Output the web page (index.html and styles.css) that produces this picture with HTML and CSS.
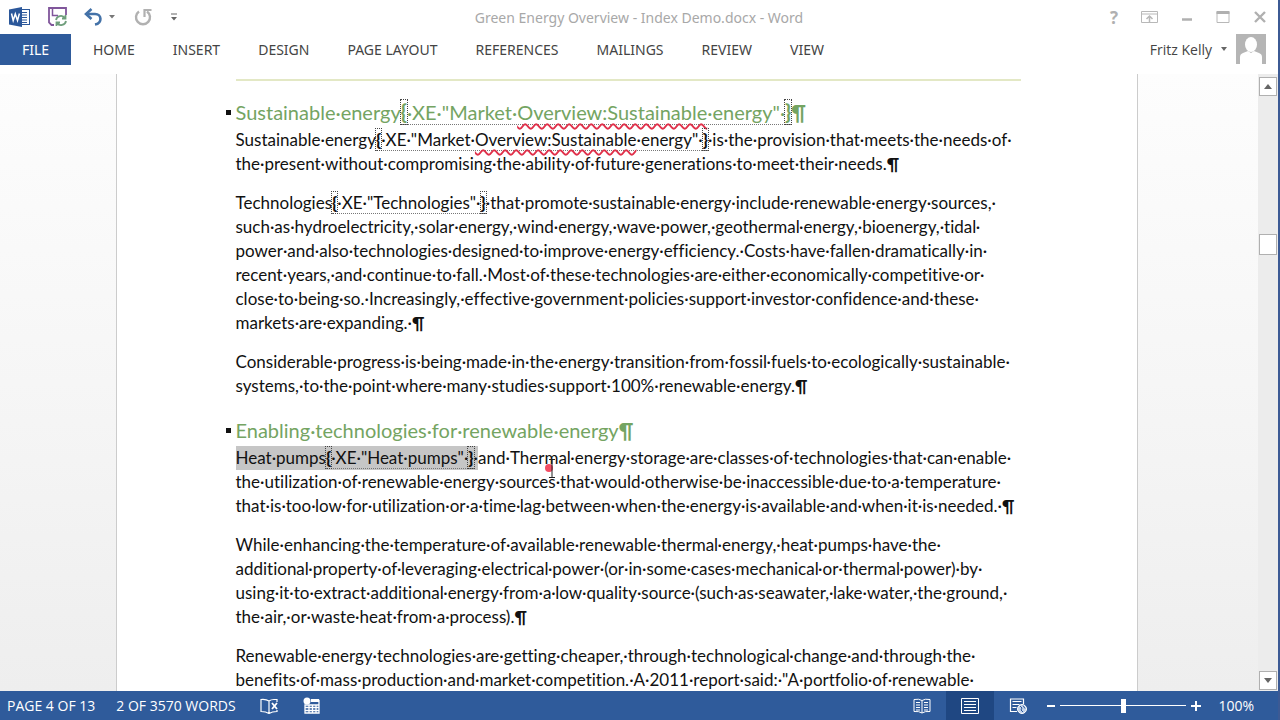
FILE: index.html
```
<!DOCTYPE html>
<html lang="en">
<head>
    <meta charset="UTF-8">
    <meta name="viewport" content="width=device-width, initial-scale=1.0">
    <title>Green Energy Overview - Index Demo.docx - Word</title>
    <link rel="stylesheet" href="styles.css">
</head>
<body>
    <header class="title-bar">
        <div class="quick-access">
            <svg class="word-logo" width="22" height="20" viewBox="0 0 22 20" aria-hidden="true">
                <rect x="9" y="2.500" width="11.500" height="15" fill="#fff" stroke="#2b579a"/>
                <path d="M12 5.500h6M12 8h6M12 10.500h6M12 13h6M12 15.500h6" stroke="#2b579a"/>
                <path d="M0 2.500L13 0v20L0 17.500z" fill="#2b579a"/>
                <path d="M2.500 6.500l1.700 7L6.300 7l2.200 6.500 1.900-7" fill="none" stroke="#fff" stroke-width="1.500"/>
            </svg>
            <button class="icon-button save" aria-label="Save">
                <svg width="20" height="20" viewBox="0 0 20 20">
                    <path d="M6 18H3.500L1 15.500V1h17v7" fill="none" stroke="#80569b" stroke-width="1.800"/>
                    <path d="M4.500 1v7.500H10" fill="none" stroke="#80569b" stroke-width="1.500"/>
                    <path d="M8 13a5 5 0 0 1 9-2M17.500 8v3.500H14M18 14a5 5 0 0 1-9 2M8.500 19v-3.500H12" fill="none" stroke="#6f9e7c" stroke-width="1.800"/>
                </svg>
            </button>
            <button class="icon-button undo" aria-label="Undo">
                <svg width="32" height="18" viewBox="0 0 32 18">
                    <path d="M2 6h9c7 0 7.500 9 0 10.500" fill="none" stroke="#4472a8" stroke-width="2.600"/>
                    <path d="M7.500 1L2 6l5.500 5" fill="none" stroke="#4472a8" stroke-width="2.600"/>
                    <path d="M25 7h6l-3 3.500z" fill="#777"/>
                </svg>
            </button>
            <button class="icon-button redo" aria-label="Repeat">
                <svg width="18" height="18" viewBox="0 0 18 18">
                    <path d="M5 3.500A7 7 0 1 0 13 3.500" fill="none" stroke="#b1b1b1" stroke-width="2.400"/>
                    <path d="M10.500 9V2h7" fill="none" stroke="#b1b1b1" stroke-width="2.200"/>
                </svg>
            </button>
            <button class="icon-button" aria-label="Customize Quick Access Toolbar">
                <svg width="8" height="8" viewBox="0 0 8 8">
                    <path d="M1 1h6" stroke="#666"/>
                    <path d="M1 4h6L4 7.500z" fill="#666"/>
                </svg>
            </button>
        </div>
        <div class="document-title">Green Energy Overview - Index Demo.docx - Word</div>
        <div class="window-controls">
            <button class="icon-button help" aria-label="Help">?</button>
            <button class="icon-button" aria-label="Ribbon Display Options">
                <svg width="17" height="14" viewBox="0 0 17 14" fill="none" stroke="#b8b8b8">
                    <path d="M.5 1.500h16v11H.5zM.5 4h16"/>
                    <path d="M8.500 12V6.500M5.500 9l3-3 3 3" stroke-width="1.500"/>
                </svg>
            </button>
            <button class="icon-button" aria-label="Minimize">
                <svg width="12" height="14" viewBox="0 0 12 14"><path d="M1 9.500h10" stroke="#b0b0b0" stroke-width="2.500"/></svg>
            </button>
            <button class="icon-button" aria-label="Maximize">
                <svg width="14" height="14" viewBox="0 0 14 14"><path d="M1 2h12v10.500H1z" fill="none" stroke="#b8b8b8"/><path d="M.5 2.500h13" stroke="#b0b0b0" stroke-width="3"/></svg>
            </button>
            <button class="icon-button" aria-label="Close">
                <svg width="14" height="14" viewBox="0 0 14 14"><path d="M2 2l10 10M12 2L2 12" stroke="#b0b0b0" stroke-width="2.400"/></svg>
            </button>
        </div>
    </header>

    <nav class="ribbon">
        <button class="tab file-tab">FILE</button>
        <button class="tab">HOME</button>
        <button class="tab">INSERT</button>
        <button class="tab">DESIGN</button>
        <button class="tab">PAGE LAYOUT</button>
        <button class="tab">REFERENCES</button>
        <button class="tab">MAILINGS</button>
        <button class="tab">REVIEW</button>
        <button class="tab">VIEW</button>
        <button class="account">
            <span>Fritz Kelly</span>
            <svg width="6" height="4" viewBox="0 0 6 4"><path d="M0 0h6L3 4z" fill="#666"/></svg>
            <svg class="avatar" width="30" height="30" viewBox="0 0 30 30">
                <path d="M0 0h30v30H0z" fill="#b5b5b5"/>
                <path d="M4 30V23q0-3 3-4l5-2 3 2 3-2 5 2q3 1 3 4v7z" fill="#fff"/>
                <ellipse cx="15" cy="10.500" rx="6" ry="7.500" fill="#fff"/>
            </svg>
        </button>
    </nav>

    <main class="workspace">
        <div class="canvas">
            <article class="page">
                <h2><span>Sustainable·energy<span class="field"><b>{</b>·XE·"Market·<span class="spelling">Overview:Sustainable</span>·energy"·<b>}</b></span><span class="mark">¶</span></span></h2>
                <p>
                    Sustainable·energy<span class="field"><b>{</b>·XE·"Market·<span class="spelling">Overview:Sustainable</span>·energy"·<b>}</b></span>·is·the·provision·that·meets·the·needs·of·<br>
                    the·present·without·compromising·the·ability·of·future·generations·to·meet·their·needs.<span class="mark">¶</span>
                </p>
                <p>
                    Technologies<span class="field"><b>{</b>·XE·"Technologies"·<b>}</b></span>·that·promote·sustainable·energy·include·renewable·energy·sources,·<br>
                    such·as·hydroelectricity,·solar·energy,·wind·energy,·wave·power,·geothermal·energy,·bioenergy,·tidal·<br>
                    power·and·also·technologies·designed·to·improve·energy·efficiency.·Costs·have·fallen·dramatically·in·<br>
                    recent·years,·and·continue·to·fall.·Most·of·these·technologies·are·either·economically·competitive·or·<br>
                    close·to·being·so.·Increasingly,·effective·government·policies·support·investor·confidence·and·these·<br>
                    markets·are·expanding.·<span class="mark">¶</span>
                </p>
                <p>
                    Considerable·progress·is·being·made·in·the·energy·transition·from·fossil·fuels·to·ecologically·sustainable·<br>
                    systems,·to·the·point·where·many·studies·support·100%·renewable·energy.<span class="mark">¶</span>
                </p>
                <h2><span>Enabling·technologies·for·renewable·energy<span class="mark">¶</span></span></h2>
                <p>
                    <span class="selected">Heat·pumps<span class="field"><b>{</b>·XE·"Heat·pumps"·<b>}</b></span>·</span>and·Ther<span class="pointer-spot">m<svg class="pointer" width="14" height="30" viewBox="0 0 14 30" aria-hidden="true"><circle cx="5" cy="12" r="4" fill="#f0203c" opacity=".8"/><path d="M5 3.500h6M8 3.500v18M5 21.500h6" stroke="#222" fill="none"/></svg></span>al·energy·storage·are·classes·of·technologies·that·can·enable·<br>
                    the·utilization·of·renewable·energy·sources·that·would·otherwise·be·inaccessible·due·to·a·temperature·<br>
                    that·is·too·low·for·utilization·or·a·time·lag·between·when·the·energy·is·available·and·when·it·is·needed.·<span class="mark">¶</span>
                </p>
                <p>
                    While·enhancing·the·temperature·of·available·renewable·thermal·energy,·heat·pumps·have·the·<br>
                    additional·property·of·leveraging·electrical·power·(or·in·some·cases·mechanical·or·thermal·power)·by·<br>
                    using·it·to·extract·additional·energy·from·a·low·quality·source·(such·as·seawater,·lake·water,·the·ground,·<br>
                    the·air,·or·waste·heat·from·a·process).<span class="mark">¶</span>
                </p>
                <p>
                    Renewable·energy·technologies·are·getting·cheaper,·through·technological·change·and·through·the·<br>
                    benefits·of·mass·production·and·market·competition.·A·2011·report·said:·"A·portfolio·of·renewable·
                </p>
            </article>
        </div>
        <div class="scrollbar">
            <button class="scroll-button" aria-label="Scroll up"><svg width="8" height="5" viewBox="0 0 8 5"><path d="M0 5h8L4 0z" fill="#666"/></svg></button>
            <div class="scroll-track"><div class="scroll-thumb"></div></div>
            <button class="scroll-button" aria-label="Scroll down"><svg width="8" height="5" viewBox="0 0 8 5"><path d="M0 0h8L4 5z" fill="#666"/></svg></button>
        </div>
    </main>

    <footer class="status-bar">
        <span class="page-count">PAGE 4 OF 13</span>
        <span class="word-count">2 OF 3570 WORDS</span>
        <button class="icon-button proofing" aria-label="Proofing errors">
            <svg width="19" height="16" viewBox="0 0 19 16" fill="none" stroke="#fff">
                <path d="M9 3Q6 1 1 1.500v12q5 0 8 2zM9 3q2-1.500 5-1.500h3V4M9 15.500q3-2 8-2V12" stroke-width="1.200"/>
                <path d="M12 5l5 6M17 5l-5 6" stroke-width="1.800"/>
            </svg>
        </button>
        <button class="icon-button" aria-label="Macro recording">
            <svg width="17" height="17" viewBox="0 0 17 17">
                <path d="M2 8h14v8H2zM2 10.500h14M2 13.500h14M6 8v8M9.500 8v8M13 8v8M9 3.500h7V8" fill="none" stroke="#fff" stroke-width="1.300"/>
                <path d="M8 2h8v3H8z" fill="#fff"/>
                <circle cx="4" cy="4" r="3.500" fill="#fff"/>
            </svg>
        </button>
        <div class="view-buttons">
            <button class="view-button" aria-label="Read Mode">
                <svg width="18" height="16" viewBox="0 0 18 16" fill="none" stroke="#fff">
                    <path d="M9 2.500Q6 .5 1 1.500v12q5-.5 8 1.500 3-2 8-1.500v-12q-5-1-8 1zM9 2.500V15"/>
                    <path d="M3 4.500h4M3 7h4M3 9.500h4M3 12h4M11 4.500h4M11 7h4M11 9.500h4M11 12h4"/>
                </svg>
            </button>
            <button class="view-button active" aria-label="Print Layout">
                <svg width="18" height="16" viewBox="0 0 18 16" fill="none" stroke="#fff">
                    <path d="M.5.5h17v15H.5zM3 3.500h12M3 6.500h12M3 9.500h12M3 12.500h12"/>
                </svg>
            </button>
            <button class="view-button" aria-label="Web Layout">
                <svg width="18" height="16" viewBox="0 0 18 16" fill="none" stroke="#fff">
                    <path d="M8 13.500H1.500V1h13v5M3.500 3.500h9M3.500 6.500h7M3.500 9.500h4" stroke-width="1.200"/>
                    <circle cx="13" cy="11" r="4.500" fill="#c3d3ea"/>
                    <path d="M11 8l2 2-1 2 2 2M14 7.500l2 3" stroke="#2b579a"/>
                </svg>
            </button>
        </div>
        <button class="zoom-button" aria-label="Zoom out"><svg width="8" height="10" viewBox="0 0 8 10"><path d="M0 5h8" stroke="#fff" stroke-width="2"/></svg></button>
        <input class="zoom-slider" type="range" min="0" max="100" value="50" aria-label="Zoom">
        <button class="zoom-button" aria-label="Zoom in"><svg width="10" height="10" viewBox="0 0 10 10"><path d="M0 5h10M5 0v10" stroke="#fff" stroke-width="2"/></svg></button>
        <button class="zoom-level">100%</button>
    </footer>
</body>
</html>
```
FILE: styles.css
```
* {
    box-sizing: border-box;
}

body {
    margin: 0;
    height: 100vh;
    display: flex;
    flex-direction: column;
    overflow: hidden;
    background: #fff;
    border-right: 2px solid #3c5a94;
    color: #444;
    font-family: "Open Sans", "Segoe UI", sans-serif;
    font-size: 14px;
}

button {
    border: 0;
    padding: 0;
    background: none;
    color: inherit;
    font: inherit;
    white-space: nowrap;
}

svg {
    display: block;
    flex: none;
}

/* title bar */
.title-bar {
    height: 34px;
    display: grid;
    grid-template-columns: 1fr auto 1fr;
    align-items: center;
}

.quick-access {
    display: flex;
    align-items: center;
    padding-left: 9px;
}

.save {
    margin-left: 17px;
}

.undo {
    margin-left: 16px;
}

.redo {
    margin: 0 18px;
}

.document-title {
    color: #a8a8a8;
    font-family: "Noto Sans", "Segoe UI", sans-serif;
}

.window-controls {
    display: flex;
    justify-content: flex-end;
    align-items: center;
    gap: 23px;
    padding-right: 11px;
}

.help {
    color: #b0b0b0;
    font-size: 17px;
    font-weight: 700;
}

/* ribbon */
.ribbon {
    flex: none;
    height: 40px;
    display: flex;
    align-items: flex-start;
}

.tab {
    height: 31px;
    padding: 0 19px;
    font-family: "Noto Sans", "Segoe UI", sans-serif;
}

.file-tab {
    width: 71px;
    margin-right: 3px;
    background: #2f5b9b;
    color: #fff;
}

.account {
    display: flex;
    align-items: center;
    gap: 9px;
    height: 30px;
    margin-left: auto;
    padding-right: 12px;
}

/* document */
.workspace {
    flex: 1;
    min-height: 0;
    display: flex;
    background: linear-gradient(#fdfdfd, #f6f6f6 50%, #eee);
}

.canvas {
    flex: 1;
    min-width: 0;
    overflow: hidden;
    padding: 0 5px 0 0;
}

.page {
    max-width: 1022px;
    height: 100%;
    margin: 0 auto;
    padding: 5px 116px 0 119px;
    background: #fff;
    border: 1px solid #ccc;
    border-width: 0 1px;
    color: #111;
    font-family: Lato, Calibri, sans-serif;
    font-size: 17px;
    font-variant-ligatures: none;
    line-height: 24px;
    white-space: nowrap;
}

.page::before {
    content: "";
    display: block;
    border-top: 2px solid #e3e8c5;
    margin-bottom: 17px;
}

.page p {
    margin: 0 0 15px;
}

.page h2 {
    display: flex;
    align-items: center;
    margin: 0 0 2px -10px;
    color: #74a462;
    font-size: 20px;
    font-weight: 400;
    line-height: 28px;
}

.page h2::before {
    content: "";
    width: 5px;
    height: 5px;
    margin-right: 5px;
    background: #111;
}

.page p + h2 {
    margin-top: 18px;
}

.mark {
    font-weight: 700;
}

.field {
    border-bottom: 1px dotted #777;
}

.field b {
    font-weight: 900;
    outline: 1px dotted #444;
}

.spelling {
    text-decoration: underline wavy #e0304a 2px;
    text-underline-offset: 3px;
}

.selected {
    display: inline-block;
    background: #c6c6c6;
}

.pointer-spot {
    position: relative;
}

.pointer {
    position: absolute;
    left: 0;
    top: 9px;
}

/* scrollbar */
.scrollbar {
    width: 20px;
    display: flex;
    flex-direction: column;
    padding: 3px 1px 1px;
    background: #ececec;
}

.scroll-button {
    height: 19px;
    display: flex;
    align-items: center;
    justify-content: center;
    background: #fff;
    border: 1px solid #b0b0b0;
}

.scroll-track {
    flex: 1;
    padding-top: 138px;
}

.scroll-thumb {
    height: 21px;
    background: #fff;
    border: 1px solid #b0b0b0;
}

/* status bar */
.status-bar {
    flex: none;
    height: 29px;
    display: flex;
    align-items: center;
    padding: 0 24px 0 7px;
    background: #2f5b9b;
    color: #fff;
}

.word-count {
    margin-left: 21px;
}

.proofing {
    margin: 0 24px;
}

.view-buttons {
    display: flex;
    align-self: stretch;
    margin-left: auto;
}

.view-button {
    width: 48px;
    display: flex;
    align-items: center;
    justify-content: center;
}

.view-button.active {
    background: #1f4782;
}

.zoom-button {
    margin: 0 5px;
}

.zoom-slider {
    appearance: none;
    width: 126px;
    height: 14px;
    margin: 0;
    background: linear-gradient(#fff, #fff) center / 100% 1px no-repeat;
}

.zoom-slider::-webkit-slider-thumb {
    appearance: none;
    width: 5px;
    height: 14px;
    background: #fff;
}

.zoom-level {
    margin-left: 12px;
}
```
